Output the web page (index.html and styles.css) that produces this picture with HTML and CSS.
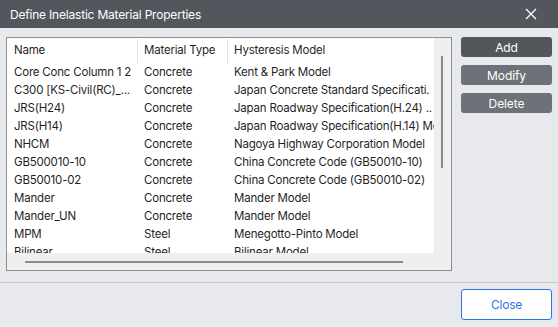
FILE: index.html
```html
<!DOCTYPE html>
<html>
<head>
<meta charset="utf-8">
<link rel="stylesheet" href="styles.css">
</head>
<body>
<div class="dialog">
  <div class="titlebar">
    <span class="title">Define Inelastic Material Properties</span>
    <svg class="close-x" width="12" height="12" viewBox="0 0 12 12"><path d="M1 1L11 11M11 1L1 11" stroke="#fff" stroke-width="1.3" fill="none"/></svg>
  </div>
  <div class="main">
    <div class="listbox">
      <div class="list">
        <div class="row head">
          <div class="c c1">Name</div>
          <div class="c c2">Material Type</div>
          <div class="c c3">Hysteresis Model</div>
        </div>
        <div class="row"><div class="c c1">Core Conc Column 1 2</div><div class="c c2">Concrete</div><div class="c c3">Kent &amp; Park Model</div></div>
        <div class="row"><div class="c c1">C300 [KS-Civil(RC)_...</div><div class="c c2">Concrete</div><div class="c c3">Japan Concrete Standard Specificati.</div></div>
        <div class="row"><div class="c c1">JRS(H24)</div><div class="c c2">Concrete</div><div class="c c3">Japan Roadway Specification(H.24) ..</div></div>
        <div class="row"><div class="c c1">JRS(H14)</div><div class="c c2">Concrete</div><div class="c c3">Japan Roadway Specification(H.14) Model</div></div>
        <div class="row"><div class="c c1">NHCM</div><div class="c c2">Concrete</div><div class="c c3">Nagoya Highway Corporation Model</div></div>
        <div class="row"><div class="c c1">GB500010-10</div><div class="c c2">Concrete</div><div class="c c3">China Concrete Code (GB50010-10)</div></div>
        <div class="row"><div class="c c1">GB50010-02</div><div class="c c2">Concrete</div><div class="c c3">China Concrete Code (GB50010-02)</div></div>
        <div class="row"><div class="c c1">Mander</div><div class="c c2">Concrete</div><div class="c c3">Mander Model</div></div>
        <div class="row"><div class="c c1">Mander_UN</div><div class="c c2">Concrete</div><div class="c c3">Mander Model</div></div>
        <div class="row"><div class="c c1">MPM</div><div class="c c2">Steel</div><div class="c c3">Menegotto-Pinto Model</div></div>
        <div class="row"><div class="c c1">Bilinear</div><div class="c c2">Steel</div><div class="c c3">Bilinear Model</div></div>
      </div>
      <div class="vscroll"><div class="vthumb"></div></div>
      <div class="hscroll"><div class="hthumb"></div></div>
      <div class="corner"></div>
    </div>
    <div class="buttons">
      <button class="btn btn-dark">Add</button>
      <button class="btn">Modify</button>
      <button class="btn">Delete</button>
    </div>
  </div>
  <div class="footer">
    <button class="close-btn">Close</button>
  </div>
</div>
</body>
</html>
```
FILE: styles.css
```css
html, body {
  margin: 0;
  padding: 0;
}
body {
  width: 558px;
  height: 327px;
  background: #e8e9ed;
  font-family: Inter, "Noto Sans", "Liberation Sans", sans-serif;
  font-size: 11.5px;
  letter-spacing: -0.2px;
  color: #1f1f1f;
  overflow: hidden;
}
.dialog {
  display: flex;
  flex-direction: column;
  height: 327px;
}
.titlebar {
  height: 28px;
  background: #52575e;
  display: flex;
  align-items: center;
  justify-content: space-between;
  padding: 0 21px 0 10px;
  flex: none;
}
.title {
  color: #ffffff;
  font-size: 12px;
  letter-spacing: -0.2px;
}
.close-x {
  display: block;
}
.main {
  display: flex;
  padding: 9px 6px 0 6px;
  gap: 9px;
  height: 245px;
  flex: none;
}
.listbox {
  width: 444px;
  height: 232px;
  border: 1px solid #8c8f94;
  background: #efefef;
  display: grid;
  grid-template-columns: 427px 17px;
  grid-template-rows: 215px 17px;
}
.list {
  background: #ffffff;
  overflow: hidden;
  border-bottom-right-radius: 2px;
}
.row {
  display: grid;
  grid-template-columns: 131px 90px 1fr;
  height: 18px;
  line-height: 18px;
  white-space: nowrap;
}
.row.head {
  height: 25px;
  line-height: 25px;
}
.c {
  overflow: hidden;
  padding-left: 6px;
}
.c1 {
  padding-left: 7px;
}
.head .c1, .head .c2 {
  border-right: 1px solid #e2e2e2;
  margin-top: 1px;
  line-height: 23px;
}
.head .c3 {
  line-height: 25px;
}
.vscroll {
  padding: 18px 0 0 7px;
}
.vthumb {
  width: 2px;
  height: 112px;
  background: #8a8a8a;
}
.hscroll {
  padding: 8px 0 0 18px;
}
.hthumb {
  width: 378px;
  height: 2px;
  background: #8a8a8a;
}
.buttons {
  display: flex;
  flex-direction: column;
  gap: 8px;
  width: 91px;
}
.btn {
  height: 20px;
  border: none;
  border-radius: 3px;
  background: #6d7279;
  color: #ffffff;
  font-family: Inter, "Noto Sans", "Liberation Sans", sans-serif;
  font-size: 12px;
  letter-spacing: -0.1px;
  padding: 0;
}
.btn-dark {
  background: #52575e;
}
.footer {
  flex: 1;
  border-top: 1px solid #c5c9cd;
  display: flex;
  justify-content: flex-end;
  padding: 6px 6px 0 0;
}
.close-btn {
  width: 91px;
  height: 31px;
  background: #ffffff;
  border: 1px solid #2f73e8;
  border-radius: 3px;
  color: #2f73e8;
  font-family: Inter, "Noto Sans", "Liberation Sans", sans-serif;
  font-size: 12px;
  letter-spacing: -0.2px;
  padding: 0;
}
```
